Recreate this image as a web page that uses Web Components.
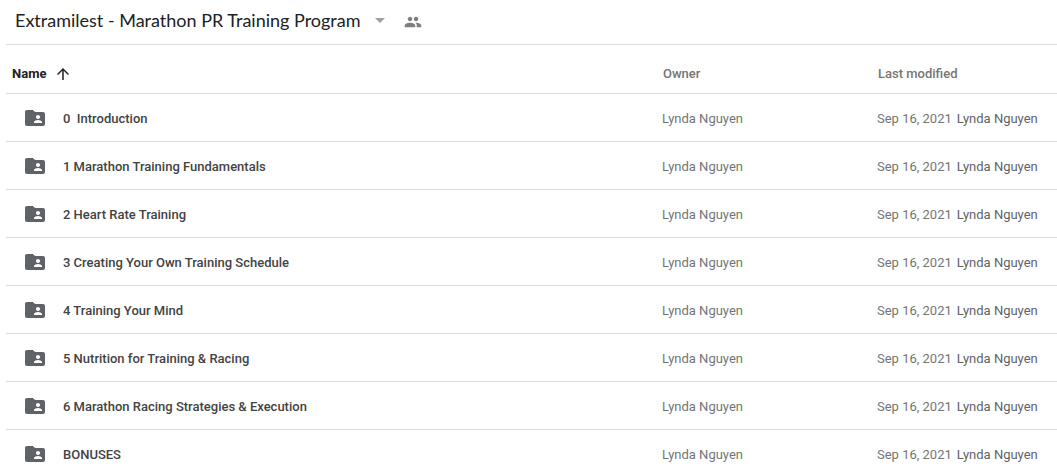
<!DOCTYPE html>
<html lang="en">
<head>
<meta charset="utf-8">
<meta name="viewport" content="width=device-width, initial-scale=1">
<title>Extramilest - Marathon PR Training Program</title>
<style>
  body { margin: 0; background: #fff; color: #202124; font: 13px/20px Roboto, sans-serif; }
</style>
</head>
<body>
<drive-folder>
  <folder-header slot="header">Extramilest - Marathon PR Training Program</folder-header>
  <file-list></file-list>
</drive-folder>

<script>
const icons = {
  caret: '<path d="M7 10l5 5 5-5z"/>',
  group: '<path d="M16 11c1.66 0 2.99-1.34 2.99-3S17.66 5 16 5s-3 1.34-3 3 1.34 3 3 3zm-8 0c1.66 0 2.99-1.34 2.99-3S9.66 5 8 5 5 6.34 5 8s1.34 3 3 3zm0 2c-2.33 0-7 1.17-7 3.5V19h14v-2.5c0-2.33-4.67-3.5-7-3.5zm8 0c-.29 0-.62.02-.97.05 1.16.84 1.97 1.97 1.97 3.45V19h6v-2.5c0-2.33-4.67-3.5-7-3.5z"/>',
  up: '<path d="M4 12l1.41 1.41L11 7.83V20h2V7.83l5.58 5.59L20 12l-8-8-8 8z"/>',
  folder: '<path d="M20 6h-8l-2-2H4c-1.1 0-1.99.9-1.99 2L2 18c0 1.1.9 2 2 2h16c1.1 0 2-.9 2-2V8c0-1.1-.9-2-2-2zm-5 3c1.1 0 2 .9 2 2s-.9 2-2 2-2-.9-2-2 .9-2 2-2zm4 8h-8v-1c0-1.33 2.67-2 4-2s4 .67 4 2v1z"/>'
};

class UiIcon extends HTMLElement {
  connectedCallback() {
    if (this.shadowRoot) return;
    this.attachShadow({ mode: 'open' }).innerHTML = `
      <style>
        :host { display: inline-block; width: 24px; height: 24px; flex: none; }
        svg { display: block; width: 100%; height: 100%; fill: currentColor; }
      </style>
      <svg viewBox="0 0 24 24" aria-hidden="true">${icons[this.getAttribute('name')]}</svg>`;
  }
}
customElements.define('ui-icon', UiIcon);

class FolderHeader extends HTMLElement {
  constructor() {
    super();
    this.attachShadow({ mode: 'open' }).innerHTML = `
      <style>
        :host { display: flex; align-items: center; height: 44px; padding-left: 9px; border-bottom: 1px solid #dadce0; }
        h1 { margin: 0; font: 400 18px/24px Lato, sans-serif; white-space: nowrap; padding-bottom: 4px; }
        button { border: 0; padding: 0; background: none; font: inherit; display: flex; }
        .menu { color: #9aa0a6; margin-left: 7px; padding-bottom: 4px; }
        .share { color: #807c82; margin-left: 12px; }
        .share ui-icon { width: 18px; height: 18px; }
      </style>
      <h1><slot></slot></h1>
      <button class="menu" aria-label="Folder actions"><ui-icon name="caret"></ui-icon></button>
      <button class="share" aria-label="Manage access"><ui-icon name="group"></ui-icon></button>`;
  }
}
customElements.define('folder-header', FolderHeader);

class FileList extends HTMLElement {
  constructor() {
    super();
    const names = [
      '0  Introduction',
      '1 Marathon Training Fundamentals',
      '2 Heart Rate Training',
      '3 Creating Your Own Training Schedule',
      '4 Training Your Mind',
      '5 Nutrition for Training &amp; Racing',
      '6 Marathon Racing Strategies &amp; Execution',
      'BONUSES'
    ];
    const rows = names.map(name => `
      <tr>
        <td class="name-cell"><div class="name"><ui-icon name="folder"></ui-icon><span>${name}</span></div></td>
        <td>Lynda Nguyen</td>
        <td><div class="modified"><span>Sep 16, 2021</span><span class="by">Lynda Nguyen</span></div></td>
      </tr>`).join('');
    this.attachShadow({ mode: 'open' }).innerHTML = `
      <style>
        :host { display: block; }
        table { width: 100%; border-collapse: separate; border-spacing: 0; table-layout: fixed; }
        .owner-col { width: 215px; }
        .modified-col { width: 180px; }
        th, td { border-bottom: 1px solid #dadce0; text-align: left; white-space: nowrap; color: #757575; }
        th { height: 38px; padding: 10px 0 0 1px; font-weight: 500; }
        th:first-child { padding-left: 6px; }
        td { height: 45px; padding: 2px 0 0; }
        .name-cell { height: 46px; padding-top: 1px; }
        tr:last-child td { border-bottom: 0; }
        thead tr:last-child th { border-bottom: 1px solid #dadce0; }
        .sort { display: flex; align-items: center; gap: 8px; border: 0; padding: 0; background: none; font: inherit; font-weight: 700; color: #202124; }
        .sort ui-icon { width: 18px; height: 18px; }
        .name { display: flex; align-items: center; gap: 16px; padding-left: 17px; font-weight: 500; color: #434343; }
        .name span { white-space: pre; padding-top: 2px; }
        .name ui-icon { color: #5f6368; }
        .modified { display: flex; gap: 5px; }
        .by { color: #5f6368; }
      </style>
      <table>
        <colgroup><col><col class="owner-col"><col class="modified-col"></colgroup>
        <thead><tr>
          <th scope="col" aria-sort="ascending"><button class="sort">Name<ui-icon name="up"></ui-icon></button></th>
          <th scope="col">Owner</th>
          <th scope="col">Last modified</th>
        </tr></thead>
        <tbody>${rows}</tbody>
      </table>`;
  }
}
customElements.define('file-list', FileList);

class DriveFolder extends HTMLElement {
  constructor() {
    super();
    this.attachShadow({ mode: 'open' }).innerHTML = `
      <style>
        :host { display: block; }
        main { padding-left: 6px; }
      </style>
      <main>
        <slot name="header"></slot>
        <slot></slot>
      </main>`;
  }
}
customElements.define('drive-folder', DriveFolder);
</script>
</body>
</html>
